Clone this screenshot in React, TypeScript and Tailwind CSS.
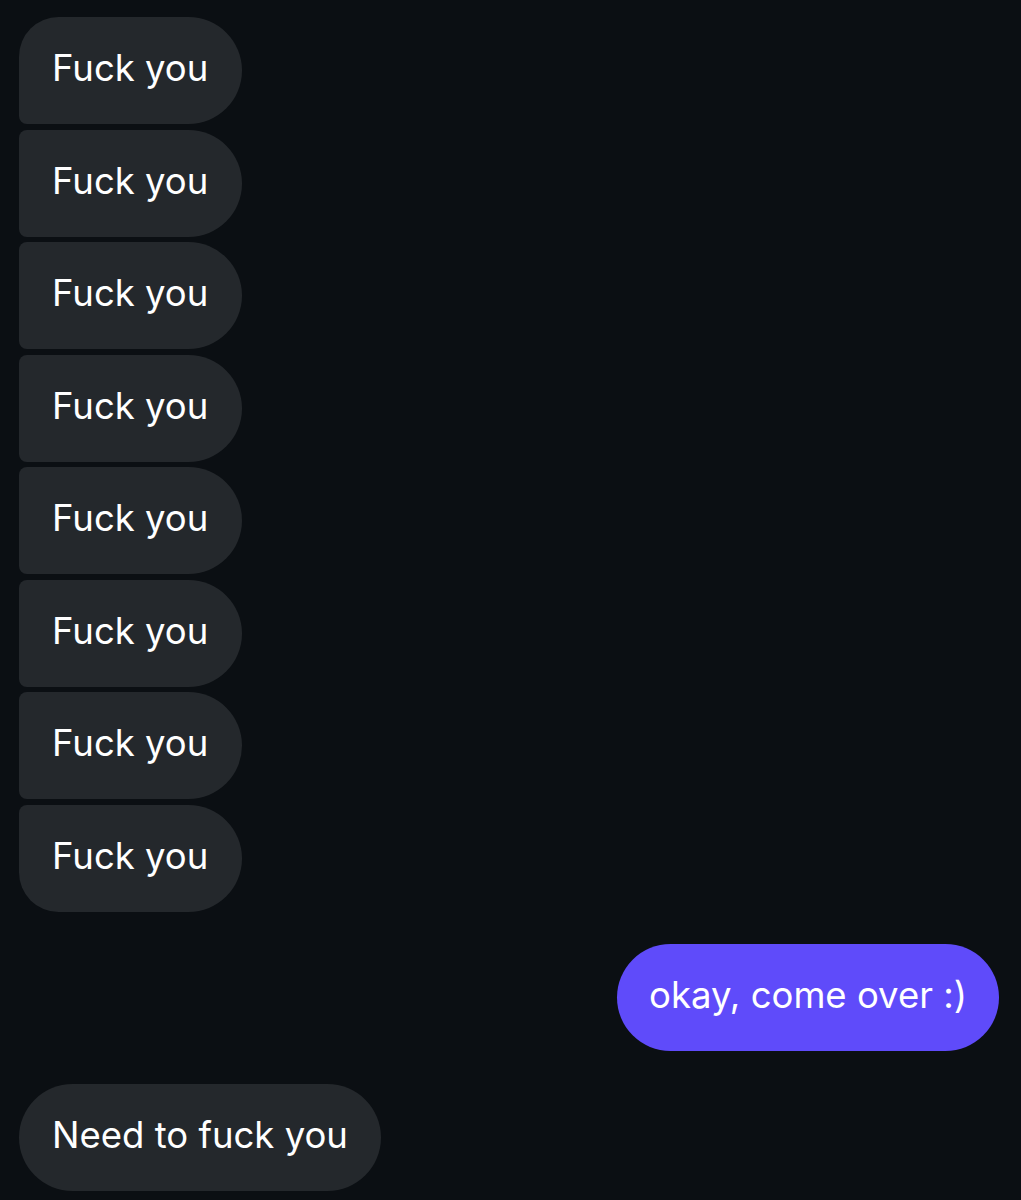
import React from 'react';

const received = Array.from({ length: 8 }, () => "Fuck you");

export default function App() {
  return (
    <div className="min-h-[1200px] w-full bg-[#0b0f13] pt-[17px] pl-[19px] pr-[22px]" style={{ fontFamily: "Inter, 'Noto Sans', sans-serif" }}>
      {/* first group */}
      <div className="flex flex-col items-start gap-[5.5px]">
        {received.map((text, i) => {
          const first = i === 0;
          const last = i === received.length - 1;
          return (
            <div
              key={i}
              className={
                "h-[107px] flex items-center pl-[33px] pr-[34px] pb-[4px] bg-[#24282c] text-white text-[36.5px] rounded-r-[54px] " +
                (first ? "rounded-tl-[40px] rounded-bl-[8px]" : last ? "rounded-tl-[8px] rounded-bl-[40px]" : "rounded-l-[8px]")
              }
            >
              {text}
            </div>
          );
        })}
      </div>

      {/* sent */}
      <div className="flex justify-end mt-[32px]">
        <div className="h-[107px] flex items-center px-[32px] pb-[4px] bg-[#5f4bfa] text-white text-[36.5px] rounded-full">
          okay, come over :)
        </div>
      </div>

      {/* second group */}
      <div className="flex mt-[33px]">
        <div className="h-[107px] flex items-center pl-[33px] pr-[33px] pb-[4px] bg-[#24282c] text-white text-[36.5px] rounded-full">
          Need to fuck you
        </div>
      </div>
    </div>
  );
}
